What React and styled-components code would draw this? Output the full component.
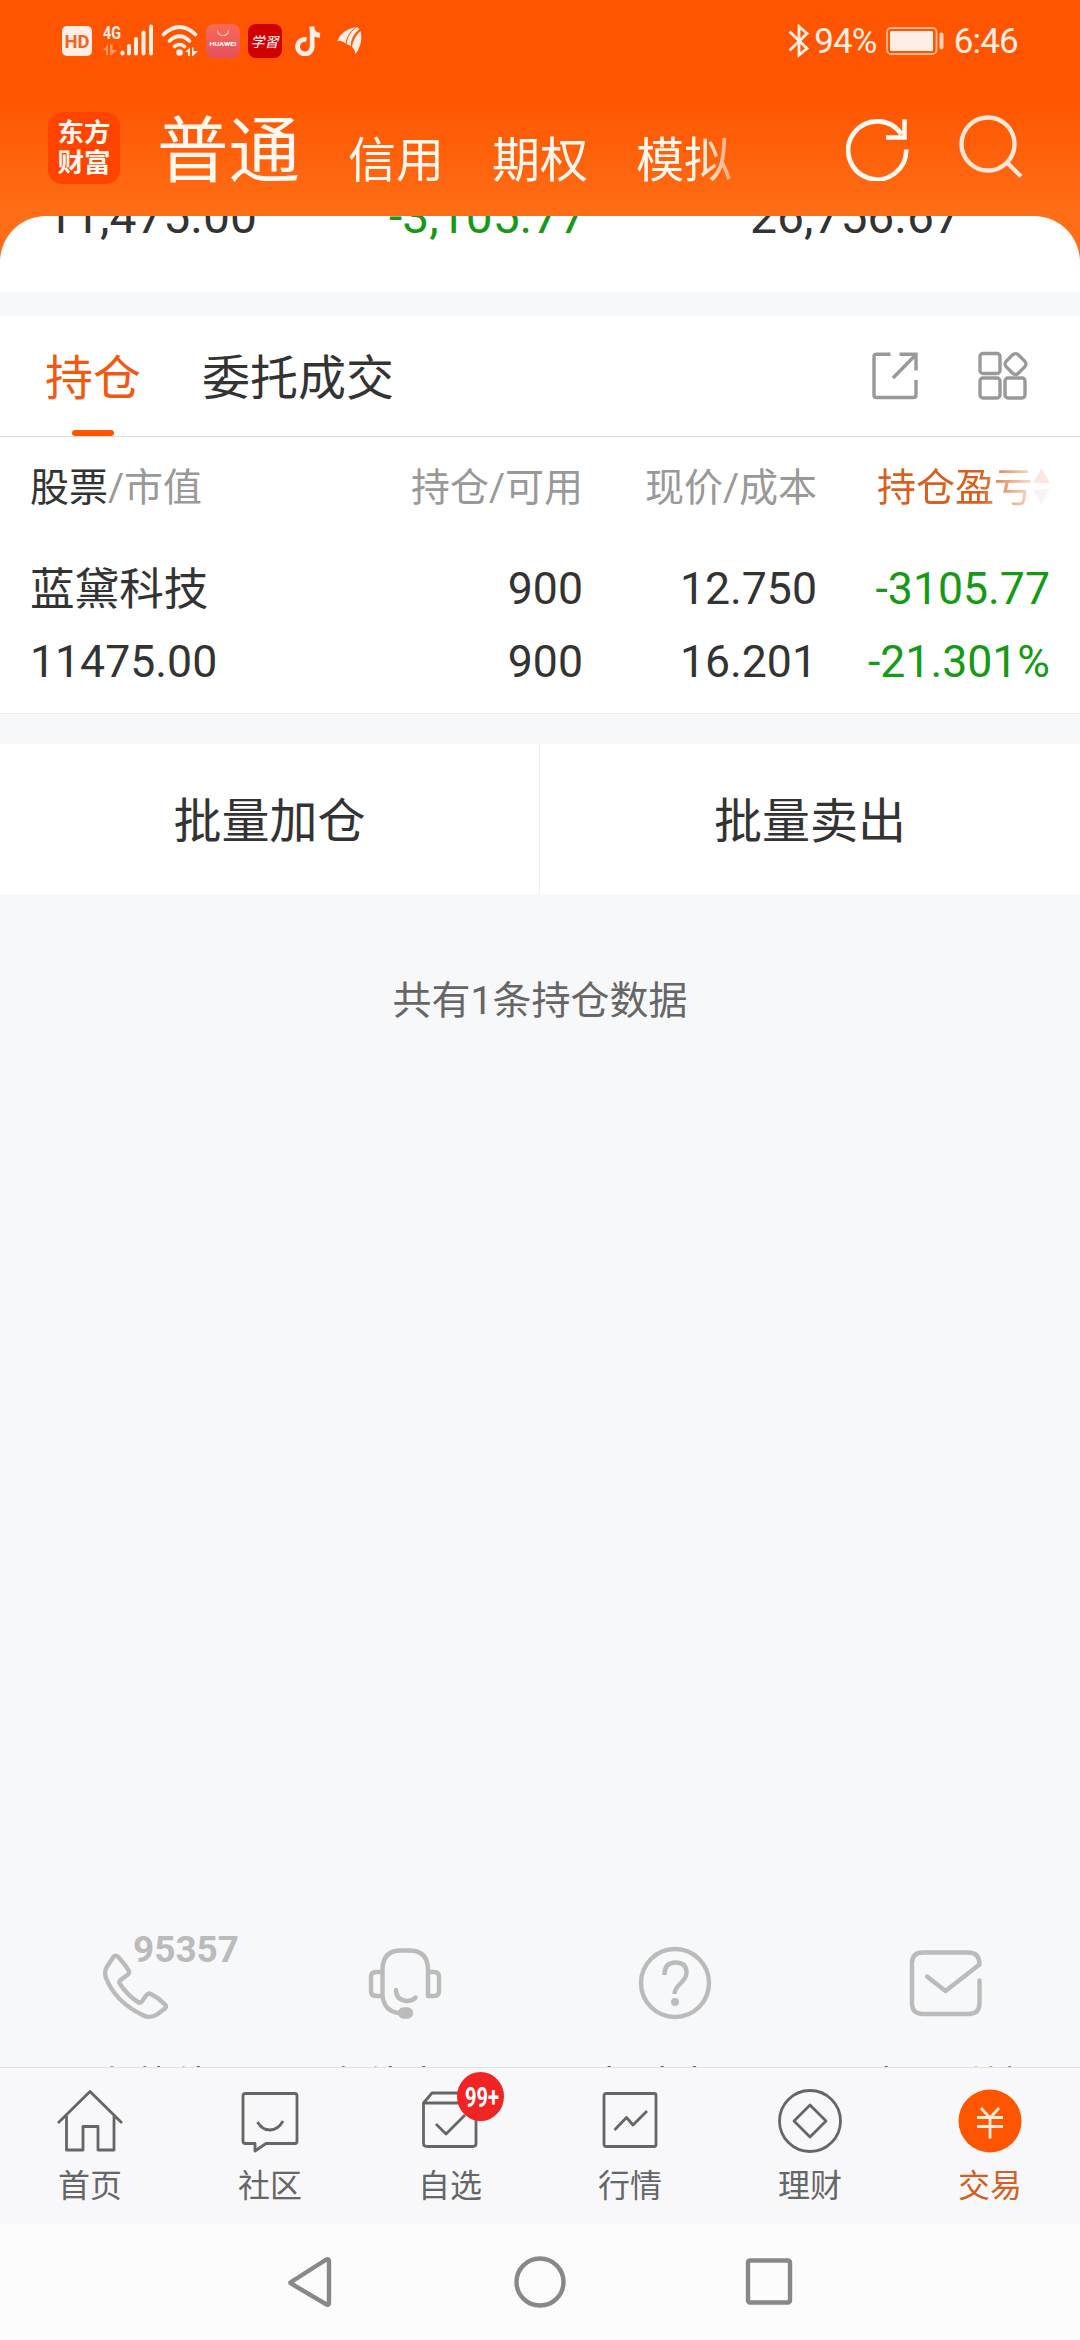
import styled, { createGlobalStyle } from 'styled-components';

const Colors = {
  orange: '#ff5500',
  green: '#159a15',
  text: '#333333',
  gray: '#999999',
  darkGray: '#666666',
  iconGray: '#bbbbbb',
  status: '#ffeee6',
  bg: '#f7f8fa',
};

const supports = [
  { label: '服务热线', icon: <PhoneIcon /> },
  { label: '在线客服', icon: <HeadsetIcon /> },
  { label: '帮助中心', icon: <QuestionIcon /> },
  { label: '意见反馈', icon: <MailIcon /> },
];

const tabs = [
  { label: '首页', icon: <HomeIcon /> },
  { label: '社区', icon: <ChatIcon /> },
  { label: '自选', icon: <FavoriteIcon />, badge: '99+' },
  { label: '行情', icon: <MarketIcon /> },
  { label: '理财', icon: <WealthIcon /> },
  { label: '交易', icon: <TradeIcon />, active: true },
];

const App = () => {
  return (
    <Screen>
      <GlobalStyle />
      <Header>
        <StatusBar />
        <TitleBar>
          <Logo>
            <span>东方</span>
            <span>财富</span>
          </Logo>
          <AccountTabs>
            <AccountTab $active>普通</AccountTab>
            <AccountTab>信用</AccountTab>
            <AccountTab>期权</AccountTab>
            <AccountTab>模拟</AccountTab>
          </AccountTabs>
          <HeaderActions>
            <svg width="64" height="66" viewBox="0 0 64 66" fill="none" stroke="#fff8f0" strokeWidth="4.6">
              <path d="M60.2 34.5A29 29 0 1 1 55.5 19.5" />
              <path d="M58.5 4.5V22.500H40" />
            </svg>
            <svg width="66" height="66" viewBox="0 0 66 66" fill="none" stroke="#ffe6d6" strokeWidth="4.4">
              <circle cx="29" cy="29" r="26.500" />
              <path d="M48 47.500L62 61.500" />
            </svg>
          </HeaderActions>
        </TitleBar>
      </Header>

      <Content>
        <Summary>
          <SummaryValue>11,475.00</SummaryValue>
          <SummaryValue $color={Colors.green}>-3,105.77</SummaryValue>
          <SummaryValue>26,756.67</SummaryValue>
        </Summary>

        <PositionTabs>
          <PositionTab $active>持仓</PositionTab>
          <PositionTab>委托成交</PositionTab>
          <TabTools>
            <svg width="46" height="48" viewBox="0 0 46 48" fill="none" stroke={Colors.gray} strokeWidth="3.4">
              <path d="M18.500 2.200H4.500Q2 2.200 2 4.700V43Q2 45.500 4.500 45.500H41.500Q44 45.500 44 43V28" />
              <path d="M27.500 2.200H44V18.500M43 3.500L21 26" />
            </svg>
            <svg width="50" height="50" viewBox="0 0 50 50" fill="none" stroke={Colors.gray} strokeWidth="3.4">
              <rect x="2" y="2.500" width="20" height="20" rx="3" />
              <rect x="2" y="27" width="20" height="20" rx="3" />
              <rect x="27" y="27" width="20" height="20" rx="3" />
              <rect x="29" y="4.500" width="17" height="17" rx="4" transform="rotate(45 37.500 13)" />
            </svg>
          </TabTools>
        </PositionTabs>

        <Positions>
          <HeadRow>
            <HeadCell>
              <Strong>股票</Strong>/市值
            </HeadCell>
            <HeadCell>持仓/可用</HeadCell>
            <HeadCell>现价/成本</HeadCell>
            <SortCell>
              持仓盈亏
              <svg width="17" height="37" viewBox="0 0 17 37">
                <path d="M8.500 0L17 15H0Z" fill="#f28d6a" />
                <path d="M0 21.500H17L8.500 36.500Z" fill="#cccccc" />
              </svg>
            </SortCell>
          </HeadRow>
          <Row>
            <StockName>蓝黛科技</StockName>
            <Cell>900</Cell>
            <Cell>12.750</Cell>
            <Cell $color={Colors.green}>-3105.77</Cell>
          </Row>
          <Row>
            <Cell>11475.00</Cell>
            <Cell>900</Cell>
            <Cell>16.201</Cell>
            <Cell $color={Colors.green}>-21.301%</Cell>
          </Row>
        </Positions>

        <BatchActions>
          <BatchButton>批量加仓</BatchButton>
          <BatchButton>批量卖出</BatchButton>
        </BatchActions>
        <Hint>共有1条持仓数据</Hint>

        <Supports>
          {supports.map(({ label, icon }) => (
            <SupportItem key={label}>
              {icon}
              <SupportLabel>{label}</SupportLabel>
            </SupportItem>
          ))}
        </Supports>
      </Content>

      <TabBar>
        {tabs.map(({ label, icon, badge, active }) => (
          <TabItem key={label} $active={active}>
            <TabIcon>
              {icon}
              {badge && (
                <Badge>
                  <ellipse cx="23.500" cy="24.500" rx="23.500" ry="24.500" fill="#f02424" />
                  <text x="8" y="34.500" textLength="34" lengthAdjust="spacingAndGlyphs">{badge}</text>
                </Badge>
              )}
            </TabIcon>
            {label}
          </TabItem>
        ))}
      </TabBar>

      <SystemNav>
        <svg width="50" height="60" viewBox="0 0 50 60">
          <path d="M5 30L40.500 7.500Q43 6.500 43 9.500V50.500Q43 53.500 40.500 52.500L5 31.500Q3.500 30.500 5 30Z" />
        </svg>
        <svg width="60" height="60" viewBox="0 0 60 60">
          <circle cx="30" cy="30" r="23.500" />
        </svg>
        <svg width="50" height="60" viewBox="0 0 50 60">
          <rect x="4" y="8.500" width="42" height="42" rx="2" />
        </svg>
      </SystemNav>
    </Screen>
  );
};

export default App;

function StatusBar() {
  return (
    <StatusRow>
      <StatusIcons>
        <svg width="30" height="30" viewBox="0 0 30 30">
          <rect width="30" height="30" rx="5" fill={Colors.status} />
          <text x="15" y="21.500" textAnchor="middle" fontSize="18.500" fontWeight="700" textLength="25" lengthAdjust="spacingAndGlyphs" fill="#f5621e">HD</text>
        </svg>
        <svg width="52" height="34" viewBox="0 0 52 34" fill={Colors.status}>
          <text x="0" y="14.500" fontSize="18" fontWeight="700" textLength="18" lengthAdjust="spacingAndGlyphs">4G</text>
          <path d="M0 26L5 20.500V31H3V26ZM7 20.500H9.500V26H14L8.500 31H7Z" opacity="0.45" />
          <rect x="17.500" y="26.500" width="4" height="5" rx="2" />
          <rect x="24" y="20" width="4" height="11.500" rx="2" />
          <rect x="31" y="13" width="4" height="18.500" rx="2" />
          <rect x="38.500" y="6.500" width="4" height="25" rx="2" />
          <rect x="46" y="0.500" width="4" height="31" rx="2" />
        </svg>
        <svg width="38" height="32" viewBox="0 0 38 32" fill="none" stroke={Colors.status} strokeWidth="3.6" strokeLinecap="round">
          <path d="M2.500 9.500Q18.500 -5.500 34.500 9.500M8.500 16Q18.500 6.500 28.500 16M13.500 21.500Q18.500 17.500 23.500 21.500" />
          <circle cx="18.500" cy="27.500" r="3.300" fill={Colors.status} stroke="none" />
          <path d="M24 27L29 22.500V31H27V27ZM31 22.500H32.500V26H37L32 31H31Z" fill={Colors.status} stroke="none" />
        </svg>
        <svg width="34" height="34" viewBox="0 0 34 34">
          <defs>
            <linearGradient id="huawei" x1="0" y1="0" x2="0" y2="1">
              <stop offset="0" stopColor="#fb6a55" />
              <stop offset="1" stopColor="#e4505e" />
            </linearGradient>
          </defs>
          <rect width="34" height="34" rx="8" fill="url(#huawei)" />
          <path d="M11.500 6.500Q12 11.500 17 11.500T22.500 6.500" fill="none" stroke="#ffc9bd" strokeWidth="1.200" />
          <text x="17" y="21.500" textAnchor="middle" fontSize="6.200" fontWeight="700" textLength="27" lengthAdjust="spacingAndGlyphs" fill="#fff">HUAWEI</text>
        </svg>
        <svg width="34" height="34" viewBox="0 0 34 34">
          <rect width="34" height="34" rx="8" fill="#d10000" />
          <text x="16.500" y="22.500" textAnchor="middle" fontSize="14" fontStyle="italic" fill="#fff">学習</text>
        </svg>
        <svg width="26" height="30" viewBox="0 0 26 30" fill="none" stroke={Colors.status} strokeWidth="4.800">
          <path d="M11.500 13.500A7.300 7.300 0 1 0 17.200 20.500V0.500M16.500 0.500Q17 8.500 25 9.500" />
        </svg>
        <svg width="26" height="30" viewBox="0 0 26 30" fill={Colors.status}>
          <path d="M0 15.500Q4 4 19 1Q10 7 8.500 17.500Q4 13.500 0 15.500Z" />
          <path d="M9.500 18Q10.500 8 20 1L22.500 3Q13 11 14 20Z" />
          <path d="M15 20.500Q16 12 23.500 5Q26.500 17 18.500 28Q17.500 23 15 20.500Z" />
        </svg>
      </StatusIcons>
      <StatusInfo>
        <svg width="22" height="34" viewBox="0 0 22 34" fill="none" stroke={Colors.status} strokeWidth="2.800">
          <path d="M1.500 7.500L19 24.500L11 31V2.500L19 9.500L1.500 26.500" />
        </svg>
        <Battery>94%</Battery>
        <svg width="60" height="28" viewBox="0 0 60 28" fill={Colors.status}>
          <rect x="1" y="1" width="49.500" height="26" rx="4" fill="none" stroke="#ffb990" strokeWidth="1.800" />
          <rect x="4" y="4" width="43" height="20" rx="1.500" />
          <rect x="53.500" y="5.500" width="4" height="17" rx="2" opacity="0.800" />
        </svg>
        <Clock>6:46</Clock>
      </StatusInfo>
    </StatusRow>
  );
}

function PhoneIcon() {
  return (
    <SupportIcon width="150" height="90" viewBox="0 0 150 90">
      <path d="M53.500 30.800Q55.700 28.500 58 30.800Q65 38.500 68.600 44.500Q69.800 46.700 68 48.500L60.500 54Q58.500 56 60 58Q68 70 78 76Q80 77.500 81.800 75.500L86.500 69Q88.300 66.500 91 68Q98 71.500 105 78.500Q107 80.700 105 82.500L97 88.500Q90 93 82.500 89C64 80 52 67 46 52Q44 46 46.500 41.500Z" />
      <text x="73" y="36" fontSize="37.500" fontWeight="700" textLength="106" lengthAdjust="spacingAndGlyphs" fill={Colors.iconGray} stroke="none">95357</text>
    </SupportIcon>
  );
}

function HeadsetIcon() {
  return (
    <SupportIcon width="150" height="90" viewBox="0 0 150 90">
      <path d="M52.500 70H46Q41 70 41 65V51Q41 46 46 46H52.500M52.500 70V44Q52.500 24.500 71 24.500H79Q98 24.500 98 44V70H104Q109 70 109 65V51Q109 46 104 46H98" />
      <path d="M52.500 70Q54.500 85.500 69 87M66 64Q66 73.500 76 75Q82 75.500 85.500 71.500" />
      <rect x="70" y="83.500" width="11" height="7" rx="3.500" fill={Colors.iconGray} />
    </SupportIcon>
  );
}

function QuestionIcon() {
  return (
    <SupportIcon width="150" height="90" viewBox="0 0 150 90">
      <circle cx="75" cy="57" r="34" />
      <path d="M64.500 49Q64.500 36.500 75.500 36.500Q86.500 36.500 86.500 46.500Q86.500 51.500 80.500 57.500Q74.500 63 74.500 68" strokeLinecap="butt" />
      <circle cx="75" cy="76" r="4" fill={Colors.iconGray} stroke="none" />
    </SupportIcon>
  );
}

function MailIcon() {
  return (
    <SupportIcon width="150" height="90" viewBox="0 0 150 90">
      <path d="M109.500 54.500V77Q109.500 88 98.500 88H53Q42 88 42 77V37Q42 26.500 53 26.500H98.500Q109.500 26.500 109.500 38.500L75.500 65L57 50.500" />
    </SupportIcon>
  );
}

function HomeIcon() {
  return (
    <LineIcon>
      <path d="M3 35L35 3.500L67 35M11.500 28V62H28V38.500H43V62H59V28" />
    </LineIcon>
  );
}

function ChatIcon() {
  return (
    <LineIcon>
      <path d="M10 5.500H60Q62 5.500 62 8V53Q62 55.500 60 55.500H31L20 63V55.500H10.500Q8 55.500 8 53V8Q8 5.500 10.500 5.500Z" />
      <path d="M22.500 34Q27 42 35 42T48 33" />
    </LineIcon>
  );
}

function FavoriteIcon() {
  return (
    <LineIcon>
      <path d="M8.500 15L17 5H52L61 15V55.500Q61 58.500 58 58.500H12Q8.500 58.500 8.500 55.500ZM8.500 15H61M21 36L31 46L50 27" />
    </LineIcon>
  );
}

function MarketIcon() {
  return (
    <LineIcon>
      <rect x="9" y="5.500" width="52" height="53" rx="2" />
      <path d="M19.500 42L31.500 29.500L38 37L52 23" />
    </LineIcon>
  );
}

function WealthIcon() {
  return (
    <LineIcon>
      <circle cx="35" cy="33" r="30.500" />
      <path d="M35 17L51 33L35 49L19 33Z" />
    </LineIcon>
  );
}

function TradeIcon() {
  return (
    <LineIcon>
      <circle cx="35" cy="33" r="31.500" fill={Colors.orange} stroke="none" />
      <path d="M26 20L35 30L44 20M35 30V50.500M22 29.500H48M22 38.500H48" stroke="#ffeee0" />
    </LineIcon>
  );
}

const GlobalStyle = createGlobalStyle`
  * {
    box-sizing: border-box;
  }

  body {
    margin: 0;
    font-family: Roboto, "Noto Sans CJK SC", sans-serif;
    color: ${Colors.text};
  }

  svg {
    display: block;
    flex-shrink: 0;
  }
`;

const Screen = styled.div`
  display: flex;
  flex-direction: column;
  width: 1080px;
  height: 2340px;
  overflow: hidden;
  background: ${Colors.bg};
`;

const Header = styled.header`
  height: 216px;
  flex-shrink: 0;
  background: linear-gradient(#ff5500 95px, #ff6e17 216px);
`;

const StatusRow = styled.div`
  display: flex;
  justify-content: space-between;
  align-items: center;
  height: 82px;
  padding: 0 62px;
`;

const StatusIcons = styled.div`
  display: flex;
  align-items: center;
  gap: 8px;

  svg:nth-child(2) {
    margin-left: 3px;
  }

  svg:nth-child(3) {
    margin-left: -2px;
  }

  svg:nth-child(4) {
    margin-left: -1px;
  }

  svg:nth-child(6) {
    margin-left: 5px;
  }

  svg:nth-child(7) {
    margin-left: 8px;
  }
`;

const StatusInfo = styled.div`
  display: flex;
  align-items: center;
  color: ${Colors.status};
  font-size: 35px;
  letter-spacing: -0.8px;
`;

const Battery = styled.div`
  margin: 0 9px 0 4px;
`;

const Clock = styled.div`
  margin-left: 8px;
`;

const TitleBar = styled.div`
  display: flex;
  align-items: center;
  height: 134px;
  padding: 0 55px 0 48px;
`;

const Logo = styled.div`
  display: flex;
  flex-direction: column;
  align-items: center;
  justify-content: center;
  width: 72px;
  height: 72px;
  margin-bottom: 2px;
  border-radius: 14px;
  background: #ff4400;
  color: #fff8f0;
  font-size: 26.5px;
  font-weight: 700;
  line-height: 30px;
`;

const AccountTabs = styled.div`
  display: flex;
  align-items: flex-start;
  gap: 48px;
  width: 630px;
  height: 134px;
  margin-left: 37px;
  mask-image: linear-gradient(to right, #000 541px, transparent 605px);
`;

const AccountTab = styled.div`
  margin-top: ${({ $active }) => ($active ? '20px' : '29px')};
  color: #fff8f0;
  font-size: ${({ $active }) => ($active ? '71.5px' : '48px')};
  line-height: 100px;
`;

const HeaderActions = styled.div`
  display: flex;
  gap: 49px;
  margin-left: auto;
  margin-bottom: 2px;
`;

const Content = styled.main`
  flex: 1;
  display: flex;
  flex-direction: column;
  min-height: 0;
  overflow: hidden;
  background: linear-gradient(#ff6e17 60px, ${Colors.bg} 60px);
`;

const Summary = styled.section`
  display: grid;
  grid-template-columns: 343px 361px 1fr;
  align-items: start;
  height: 76px;
  padding-left: 46px;
  flex-shrink: 0;
  overflow: hidden;
  border-radius: 46px 46px 0 0;
  background: #ffffff;
`;

const SummaryValue = styled.div`
  margin-top: -27px;
  color: ${({ $color }) => $color || Colors.text};
  font-size: 48px;
  line-height: 56px;
`;

const PositionTabs = styled.nav`
  display: flex;
  align-items: stretch;
  height: 121px;
  margin-top: 24px;
  padding: 0 52px 0 45px;
  flex-shrink: 0;
  border-bottom: 1px solid #dddddd;
  background: #ffffff;
`;

const PositionTab = styled.div`
  display: flex;
  flex-direction: column;
  align-items: center;
  margin-right: 61px;
  color: ${({ $active }) => ($active ? '#f05a10' : Colors.text)};
  font-size: 48px;
  line-height: 126px;

  &::after {
    content: '';
    width: 42px;
    height: 6px;
    margin-top: -12px;
    flex-shrink: 0;
    border-radius: 3px;
    background: ${({ $active }) => ($active ? Colors.orange : 'transparent')};
  }
`;

const TabTools = styled.div`
  display: flex;
  align-items: center;
  gap: 60px;
  margin-left: auto;
`;

const Positions = styled.section`
  height: 277px;
  padding: 12px 30px 0 30px;
  flex-shrink: 0;
  border-bottom: 1px solid #eeeeee;
  background: #ffffff;
`;

const Row = styled.div`
  display: grid;
  grid-template-columns: 302px 251px 234px 1fr;
  align-items: center;
  height: 73px;
`;

const HeadRow = styled(Row)`
  height: 70px;
  margin-bottom: 33px;
`;

const HeadCell = styled.div`
  color: ${Colors.gray};
  font-size: 39px;
  text-align: right;

  &:first-child {
    text-align: left;
  }
`;

const Strong = styled.span`
  color: ${Colors.text};
`;

const SortCell = styled.div`
  display: flex;
  align-items: center;
  justify-content: flex-end;
  color: #d95f1e;
  font-size: 39px;
  mask-image: linear-gradient(to right, #000 162px, rgba(0, 0, 0, 0.2) 216px);

  svg {
    margin-top: 5px;
  }
`;

const Cell = styled.div`
  color: ${({ $color }) => $color || Colors.text};
  font-size: 44.6px;
  text-align: right;
  white-space: nowrap;

  &:first-child {
    text-align: left;
  }
`;

const StockName = styled(Cell)`
  padding-bottom: 6px;
`;

const BatchActions = styled.div`
  display: grid;
  grid-template-columns: 1fr 1fr;
  height: 150px;
  margin-top: 30px;
  flex-shrink: 0;
  background: #ffffff;
`;

const BatchButton = styled.button`
  padding: 0 0 5px;
  border: none;
  background: none;
  color: ${Colors.text};
  font-family: inherit;
  font-size: 48px;

  &:first-child {
    border-right: 1px solid #eeeeee;
  }
`;

const Hint = styled.p`
  margin: 78px 0 0;
  color: ${Colors.darkGray};
  font-size: 39px;
  line-height: 58px;
  text-align: center;
`;

const Supports = styled.section`
  display: grid;
  grid-template-columns: repeat(4, 1fr);
  height: 141px;
  margin-top: auto;
  overflow: hidden;
`;

const SupportItem = styled.div`
  display: flex;
  flex-direction: column;
  align-items: center;
`;

const SupportIcon = styled.svg`
  fill: none;
  overflow: visible;
  stroke: ${Colors.iconGray};
  stroke-width: 4.4;
  stroke-linecap: round;
  stroke-linejoin: round;
`;

const SupportLabel = styled.div`
  margin-top: 51px;
  color: ${Colors.darkGray};
  font-size: 39px;
  line-height: 39px;
`;

const TabBar = styled.nav`
  display: grid;
  grid-template-columns: repeat(6, 1fr);
  height: 157px;
  flex-shrink: 0;
  border-top: 1px solid #e2e2e4;
  background: #f8f8fa;
`;

const TabItem = styled.div`
  display: flex;
  flex-direction: column;
  align-items: center;
  padding-top: 20px;
  color: ${({ $active }) => ($active ? '#d3601f' : Colors.darkGray)};
  font-size: 32px;
  line-height: 44px;
`;

const TabIcon = styled.div`
  position: relative;
  margin-bottom: 10px;
`;

const LineIcon = styled.svg.attrs({ width: 70, height: 66, viewBox: '0 0 70 66' })`
  fill: none;
  stroke: ${Colors.darkGray};
  stroke-width: 2.8;
  stroke-linejoin: round;
`;

const Badge = styled.svg.attrs({ width: 47, height: 49, viewBox: '0 0 47 49' })`
  position: absolute;
  top: -16px;
  left: 42px;
  fill: #ffffff;
  font-size: 28px;
  font-weight: 700;
`;

const SystemNav = styled.nav`
  display: flex;
  justify-content: center;
  align-items: center;
  gap: 174px;
  height: 116px;
  flex-shrink: 0;
  background: #fcfcfc;

  svg {
    fill: none;
    stroke: #888888;
    stroke-width: 4.4;
  }
`;
